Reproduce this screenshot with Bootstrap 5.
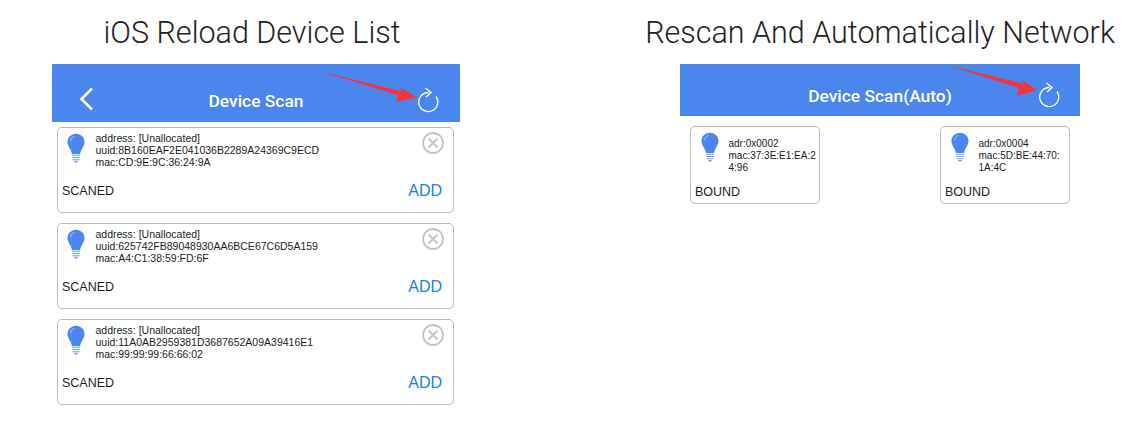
<!DOCTYPE html>
<html lang="en">
<head>
    <meta charset="UTF-8">
    <meta name="viewport" content="width=device-width, initial-scale=1.0">
    <title>Device Scan</title>
    <link href="https://cdn.jsdelivr.net/npm/bootstrap@5.3.0/dist/css/bootstrap.min.css" rel="stylesheet">
    <style>
        body {
            background-color: #ffffff;
            color: #1c1c1c;
            font-family: "Roboto", "Liberation Sans", sans-serif;
            height: 443px;
            overflow: hidden;
        }
        .page-wrap {
            padding-left: 52px;
            gap: 185px;
        }
        .shot-left { width: 408px; }
        .shot-right { width: 470px; }
        .shot-title {
            font-size: 30.5px;
            font-weight: 300;
            line-height: 38px;
            margin: 14px 0 12px;
            white-space: nowrap;
            color: #222;
        }
        .shot-left .shot-title { margin-right: 8px; }
        .scan-bar {
            position: relative;
            background-color: #4a86ee;
            color: #fff;
            font-weight: 500;
            font-size: 17.4px;
        }
        .shot-left .scan-bar { height: 58px; width: 408px; padding-top: 24px; }
        .shot-right .scan-bar { height: 52px; width: 400px; padding-top: 19px; }
        .back-arrow { position: absolute; left: 27px; top: 23px; }
        .reload-icon { position: absolute; right: 19px; top: 23px; }
        .shot-right .reload-icon { top: 18px; right: 18px; }
        .red-arrow { position: absolute; left: 266px; top: 5px; }
        .shot-right .red-arrow { left: 266px; top: 0; }
        .scan-list { padding: 5px 6px 0 5px; gap: 10px; }
        .dev-card {
            border: 1.5px solid #b9b9b9;
            border-radius: 5px;
            position: relative;
        }
        .dev-wide { height: 86px; padding: 4px 4px 0 4px; }
        .bulb { flex: none; margin-left: 1px; margin-top: 1px; }
        .dev-info {
            font-family: "Liberation Sans", sans-serif;
            font-size: 10.5px;
            line-height: 11.8px;
        }
        .dev-wide .dev-info { margin-left: 10.5px; margin-top: 1px; }
        .dev-status { font-size: 12.5px; line-height: 16px; font-family: "Liberation Sans", sans-serif; }
        .dev-wide .dev-status { margin-top: 13px; }
        .add-link {
            color: #1a7ff0;
            font-size: 16px;
            line-height: 20px;
            font-family: "Liberation Sans", sans-serif;
            margin-right: 7px;
        }
        .close-icon { position: absolute; right: 8px; top: 3px; }
        .auto-row { padding: 10px 10px 0; width: 400px; }
        .dev-small { width: 130px; height: 78px; padding: 4px 4px 0 4px; }
        .dev-small .dev-info { font-size: 10px; margin-left: 10px; margin-top: 7px; white-space: nowrap; }
        .dev-small .dev-status { margin-top: 11px; }
        .dev-small .bulb { margin-left: 1.5px; }
    </style>
</head>
<body>

    <div class="page-wrap d-flex">

        <!-- iOS list -->
        <div class="shot-left d-flex flex-column align-items-center">
            <h1 class="shot-title">iOS Reload Device List</h1>
            <div class="scan-bar text-center">
                Device Scan
                <svg class="back-arrow" width="15" height="24" viewBox="0 0 15 24"><path d="M13 1.5 2.500 12 13 22.500" fill="none" stroke="#fff" stroke-width="2.600"/></svg>
                <svg class="reload-icon" width="24" height="26" viewBox="0 0 24 26"><use href="#reload-shape"/></svg>
                <svg class="red-arrow" width="100" height="36" viewBox="0 0 100 36"><path d="M1 2 84 22.500 82.500 18.500 99 28.500 78 33 80 26Z" fill="#f5333a"/></svg>
            </div>
            <div class="scan-list d-flex flex-column w-100">
                <div class="dev-card dev-wide bg-white">
                    <div class="d-flex ps-1">
                        <svg class="bulb" width="18" height="31" viewBox="0 0 20 34"><use href="#bulb-shape"/></svg>
                        <div class="dev-info">address: [Unallocated]<br>uuid:8B160EAF2E041036B2289A24369C9ECD<br>mac:CD:9E:9C:36:24:9A</div>
                    </div>
                    <div class="d-flex justify-content-between align-items-center dev-status"><span>SCANED</span><span class="add-link">ADD</span></div>
                    <svg class="close-icon" width="24" height="24" viewBox="0 0 24 24"><use href="#close-shape"/></svg>
                </div>
                <div class="dev-card dev-wide bg-white">
                    <div class="d-flex ps-1">
                        <svg class="bulb" width="18" height="31" viewBox="0 0 20 34"><use href="#bulb-shape"/></svg>
                        <div class="dev-info">address: [Unallocated]<br>uuid:625742FB89048930AA6BCE67C6D5A159<br>mac:A4:C1:38:59:FD:6F</div>
                    </div>
                    <div class="d-flex justify-content-between align-items-center dev-status"><span>SCANED</span><span class="add-link">ADD</span></div>
                    <svg class="close-icon" width="24" height="24" viewBox="0 0 24 24"><use href="#close-shape"/></svg>
                </div>
                <div class="dev-card dev-wide bg-white">
                    <div class="d-flex ps-1">
                        <svg class="bulb" width="18" height="31" viewBox="0 0 20 34"><use href="#bulb-shape"/></svg>
                        <div class="dev-info">address: [Unallocated]<br>uuid:11A0AB2959381D3687652A09A39416E1<br>mac:99:99:99:66:66:02</div>
                    </div>
                    <div class="d-flex justify-content-between align-items-center dev-status"><span>SCANED</span><span class="add-link">ADD</span></div>
                    <svg class="close-icon" width="24" height="24" viewBox="0 0 24 24"><use href="#close-shape"/></svg>
                </div>
            </div>
        </div>

        <!-- auto network -->
        <div class="shot-right d-flex flex-column align-items-center">
            <h1 class="shot-title">Rescan And Automatically Network</h1>
            <div class="scan-bar text-center">
                Device Scan(Auto)
                <svg class="reload-icon" width="24" height="26" viewBox="0 0 24 26"><use href="#reload-shape"/></svg>
                <svg class="red-arrow" width="100" height="36" viewBox="0 0 100 36"><path d="M1 1 78 20 76 16 91 26 71 32 73 24Z" fill="#f5333a"/></svg>
            </div>
            <div class="auto-row d-flex justify-content-between">
                <div class="dev-card dev-small bg-white">
                    <div class="d-flex ps-1">
                        <svg class="bulb" width="18" height="31" viewBox="0 0 20 34"><use href="#bulb-shape"/></svg>
                        <div class="dev-info">adr:0x0002<br>mac:37:3E:E1:EA:2<br>4:96</div>
                    </div>
                    <div class="dev-status">BOUND</div>
                </div>
                <div class="dev-card dev-small bg-white">
                    <div class="d-flex ps-1">
                        <svg class="bulb" width="18" height="31" viewBox="0 0 20 34"><use href="#bulb-shape"/></svg>
                        <div class="dev-info">adr:0x0004<br>mac:5D:BE:44:70:<br>1A:4C</div>
                    </div>
                    <div class="dev-status">BOUND</div>
                </div>
            </div>
        </div>
    </div>

    <!-- shared icon shapes -->
    <svg width="0" height="0" class="position-absolute">
        <defs>
            <g id="bulb-shape">
                <path d="M10 .5C4.600 .5 .5 4.600 .5 9.600c0 5 3.700 7.600 5 13.400h9c1.300-5.800 5-8.400 5-13.400C19.500 4.600 15.400 .5 10 .5Z" fill="#4a86ee"/>
                <path d="M4 9C4 6 6 4 8.500 3.500" fill="none" stroke="#a9c8f8" stroke-width="1"/>
                <path d="M5.500 24.500h9M5.800 27h8.400M6.300 29.500h7.400" stroke="#6a9ef2" stroke-width="1.300"/>
                <path d="M7.500 31h5l-2.500 2Z" fill="#6a9ef2"/>
            </g>
            <g id="close-shape" fill="none" stroke="#c4c4c4" stroke-width="1.800">
                <circle cx="12" cy="12" r="10"/>
                <path d="M7.500 7.500l9 9M16.500 7.500l-9 9"/>
            </g>
            <path id="reload-shape" d="M11.500 5.500A9.500 9.500 0 1 0 19 9.500M8.500 1 14 5.500 9 10" fill="none" stroke="#fff" stroke-width="1.300"/>
        </defs>
    </svg>

    <script src="https://cdn.jsdelivr.net/npm/bootstrap@5.3.0/dist/js/bootstrap.bundle.min.js"></script>
</body>
</html>
